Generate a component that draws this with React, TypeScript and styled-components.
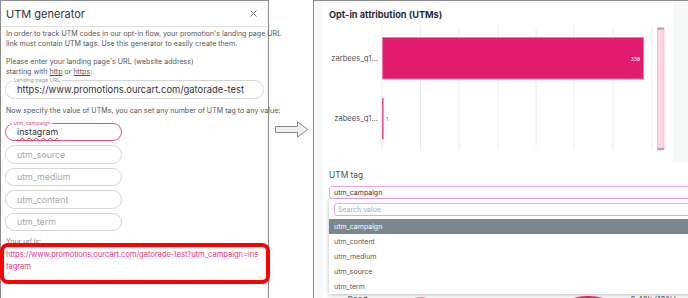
import React from "react";
import styled, { createGlobalStyle } from "styled-components";

const Global = createGlobalStyle`
  html, body { margin: 0; padding: 0; background: #fff; }
  body { width: 688px; height: 298px; overflow: hidden; font-family: Inter, "Noto Sans", sans-serif; }
  * { box-sizing: border-box; }
`;

const Page = styled.div`
  display: flex;
  width: 688px;
  height: 298px;
  overflow: hidden;
`;

/* ---------- Left: UTM generator dialog ---------- */
const Dialog = styled.section`
  width: 269px;
  height: 298px;
  flex: none;
  border: 1px solid #8c8c8c;
  border-bottom: none;
  display: flex;
  flex-direction: column;
  color: #555;
`;

const DialogHeader = styled.header`
  height: 26px;
  flex: none;
  border-bottom: 1px solid #e3e3e3;
  display: flex;
  align-items: center;
  justify-content: space-between;
  padding: 0 11px 0 5px;
`;

const DialogTitle = styled.h1`
  margin: 0;
  font-size: 11px;
  font-weight: 400;
  color: #333;
`;

const DialogBody = styled.div`
  padding: 2px 4px 0 4px;
  display: flex;
  flex-direction: column;
`;

const Para = styled.p<{ $mt?: number }>`
  margin: ${(p) => p.$mt ?? 0}px 0 0 1px;
  font-size: 7.1px;
  line-height: 10px;
  color: #555;
  white-space: nowrap;
  a { color: #555; text-decoration: underline; }
`;

const Field = styled.div<{ $w?: number; $active?: boolean; $mt?: number }>`
  position: relative;
  width: ${(p) => (p.$w ? `${p.$w}px` : "100%")};
  height: 18.5px;
  margin-top: ${(p) => p.$mt ?? 4}px;
  border: ${(p) => (p.$active ? "1.4px solid #e6508f" : "1px solid #d6d6d6")};
  border-radius: 10px;
  display: flex;
  align-items: center;
  padding-left: 11px;
  font-size: 8.8px;
  color: #333;
`;

const UrlValue = styled.span`
  font-size: 9.4px;
`;

const FieldLabel = styled.span<{ $active?: boolean }>`
  position: absolute;
  top: -4px;
  left: 6px;
  padding: 0 1.5px;
  background: #fff;
  font-size: 5.4px;
  line-height: 6px;
  color: ${(p) => (p.$active ? "#e6508f" : "#9a9a9a")};
`;

const Placeholder = styled.span`
  color: #a6a6a6;
`;

const Misspelled = styled.span`
  text-decoration: underline wavy #e0303a;
  text-decoration-thickness: 0.7px;
  text-underline-offset: 1.5px;
`;

const UrlLabel = styled.div`
  margin: 6px 0 0 1px;
  font-size: 7px;
  line-height: 9px;
  color: #777;
`;

const ResultBox = styled.div`
  margin: -3px -6px 0 -5px;
  border: 4.5px solid #ff0000;
  border-radius: 8px;
  padding: 1.5px 0 7.5px 2px;
  font-size: 7.7px;
  letter-spacing: -0.1px;
  line-height: 12px;
  color: #e6398b;
`;

const ResultLine = styled.div`
  white-space: nowrap;
`;

/* ---------- Arrow ---------- */
const ArrowCol = styled.div`
  width: 44px;
  flex: none;
  padding: 121px 0 0 6px;
`;

/* ---------- Right: dashboard ---------- */
const Dashboard = styled.section`
  flex: 1;
  height: 298px;
  border-left: 1px solid #8c8c8c;
  border-top: 1px solid #8c8c8c;
  background: #f7f8f8;
  display: flex;
  flex-direction: column;
  padding-left: 9px;
  overflow: hidden;
`;

const ChartCard = styled.div`
  background: #fff;
  width: 350px;
  height: 161px;
  flex: none;
  padding: 8px 0 0 0;
`;

const ChartTitle = styled.h2`
  margin: 0 0 4px 6px;
  font-size: 9.2px;
  line-height: 12px;
  font-weight: 700;
  color: #1f2a40;
`;

const FilterSection = styled.div`
  flex: 1;
  background: #fff;
  padding: 8px 0 0 6px;
`;

const FilterLabel = styled.div`
  font-size: 8.4px;
  line-height: 10px;
  color: #555;
`;

const SelectBox = styled.div`
  margin-top: 6px;
  height: 13px;
  width: 380px;
  border: 1px solid #eba3ec;
  border-radius: 3px;
  display: flex;
  align-items: center;
  padding-left: 4px;
  font-size: 7px;
  color: #333;
`;

const SelectArea = styled.div`
  position: relative;
`;

const Menu = styled.ul`
  position: absolute;
  top: 0;
  left: 0;
  width: 380px;
  margin: 0;
  padding: 4px 0 0 0;
  list-style: none;
  background: #fff;
  box-shadow: 0 1px 4px rgba(0, 0, 0, 0.28);
  z-index: 2;
`;

const SearchInput = styled.div`
  margin: 0 0 3px 5px;
  height: 13px;
  border: 1px solid #eba3ec;
  border-radius: 3px;
  display: flex;
  align-items: center;
  padding-left: 3px;
  font-size: 7px;
  color: #aaa;
`;

const Option = styled.li<{ $active?: boolean }>`
  height: 15px;
  display: flex;
  align-items: center;
  padding-left: 5px;
  font-size: 7px;
  color: ${(p) => (p.$active ? "#fff" : "#555")};
  background: ${(p) => (p.$active ? "#7b878c" : "transparent")};
`;

const Beneath = styled.div`
  height: 95px;
`;

const StatsRow = styled.div`
  display: flex;
  align-items: flex-start;
  height: 12px;
  font-size: 8px;
  color: #555;
  padding-left: 18px;
`;

const StatText = styled.span<{ $ml: number }>`
  margin-left: ${(p) => p.$ml}px;
  line-height: 10px;
`;

const CloseIcon = () => (
  <svg width="7" height="7" viewBox="0 0 7 7">
    <path d="M0.5 0.5 L6.5 6.5 M6.5 0.5 L0.5 6.5" stroke="#666" strokeWidth="0.9" />
  </svg>
);

const Arrow = () => (
  <svg width="34" height="17" viewBox="0 0 34 17">
    <path
      d="M0.5 5.5 H22.5 V0.8 L32.8 8.5 L22.5 16.2 V11.5 H0.5 Z"
      fill="#efefef"
      stroke="#8a8a8a"
      strokeWidth="1"
    />
  </svg>
);

const grid = [59, 97.5, 136, 175, 213, 251, 290, 329];

const Chart = () => (
  <svg width="350" height="130" viewBox="0 0 350 130">
    {grid.map((x) => (
      <line key={x} x1={x} x2={x} y1={3} y2={125} stroke="#ececec" strokeWidth="1" />
    ))}
    <rect x="59.5" y="12.5" width="261" height="41.5" fill="#e11c6d" stroke="#f07aa8" strokeWidth="1" />
    <text x="317" y="35.5" fontSize="5" fill="#fff" textAnchor="end" fontFamily="Inter, sans-serif">338</text>
    <rect x="59" y="73" width="1.6" height="41" fill="#e8508d" />
    <text x="63" y="95.5" fontSize="5" fill="#666" fontFamily="Inter, sans-serif">1</text>
    <text x="55" y="35.5" fontSize="7.6" fill="#555" textAnchor="end" fontFamily="Inter, sans-serif">zarbees_q1...</text>
    <text x="55" y="95.5" fontSize="7.6" fill="#555" textAnchor="end" fontFamily="Inter, sans-serif">zabees_q1...</text>
    <rect x="334.5" y="3.5" width="6.5" height="121" rx="1" fill="#fcd5e5" stroke="#f4b5cf" strokeWidth="0.8" />
    <rect x="334" y="2.5" width="7.5" height="2.2" rx="1.1" fill="#a9a9a9" />
    <rect x="334" y="123" width="7.5" height="2.2" rx="1.1" fill="#a9a9a9" />
  </svg>
);

const Donuts = () => (
  <svg width="240" height="10" viewBox="0 0 240 10" style={{ marginLeft: 20 }}>
    <path d="M20 10 Q34 0 48 10" stroke="#f08fb5" strokeWidth="4" fill="none" />
    <path d="M176 10 Q200 -2 228 10" stroke="#e3245f" strokeWidth="4" fill="none" />
  </svg>
);

export default function App() {
  return (
    <>
      <Global />
      <Page>
        <Dialog>
          <DialogHeader>
            <DialogTitle>UTM generator</DialogTitle>
            <CloseIcon />
          </DialogHeader>
          <DialogBody>
            <Para>
              In order to track UTM codes in our opt-in flow, your promotion's landing page URL
              <br />
              link must contain UTM tags. Use this generator to easily create them.
            </Para>
            <Para $mt={8}>
              Please enter your landing page's URL (website address)
              <br />
              starting with <a>http</a> or <a>https</a>:
            </Para>
            <Field $mt={3}>
              <FieldLabel>Landing page URL</FieldLabel>
              <UrlValue>https://www.promotions.ourcart.com/gatorade-test</UrlValue>
            </Field>
            <Para $mt={7}>
              Now specify the value of UTMs, you can set any number of UTM tag to any value:
            </Para>
            <Field $w={117} $active $mt={7}>
              <FieldLabel $active>utm_campaign</FieldLabel>
              <Misspelled>instagram</Misspelled>
            </Field>
            <Field $w={117}>
              <Placeholder>utm_source</Placeholder>
            </Field>
            <Field $w={117}>
              <Placeholder>utm_medium</Placeholder>
            </Field>
            <Field $w={117}>
              <Placeholder>utm_content</Placeholder>
            </Field>
            <Field $w={117}>
              <Placeholder>utm_term</Placeholder>
            </Field>
            <UrlLabel>Your url is:</UrlLabel>
            <ResultBox>
              <ResultLine>https://www.promotions.ourcart.com/gatorade-test?utm_campaign=ins</ResultLine>
              <ResultLine>tagram</ResultLine>
            </ResultBox>
          </DialogBody>
        </Dialog>

        <ArrowCol>
          <Arrow />
        </ArrowCol>

        <Dashboard>
          <ChartCard>
            <ChartTitle>Opt-in attribution (UTMs)</ChartTitle>
            <Chart />
          </ChartCard>
          <FilterSection>
            <FilterLabel>UTM tag</FilterLabel>
            <SelectBox>utm_campaign</SelectBox>
            <SelectArea>
              <Menu>
                <SearchInput>Search value</SearchInput>
                <Option $active>utm_campaign</Option>
                <Option>utm_content</Option>
                <Option>utm_medium</Option>
                <Option>utm_source</Option>
                <Option>utm_term</Option>
              </Menu>
              <Beneath />
              <StatsRow>
                <span>Good</span>
                <Donuts />
                <StatText $ml={3}>2.42k (10%)</StatText>
              </StatsRow>
            </SelectArea>
          </FilterSection>
        </Dashboard>
      </Page>
    </>
  );
}
